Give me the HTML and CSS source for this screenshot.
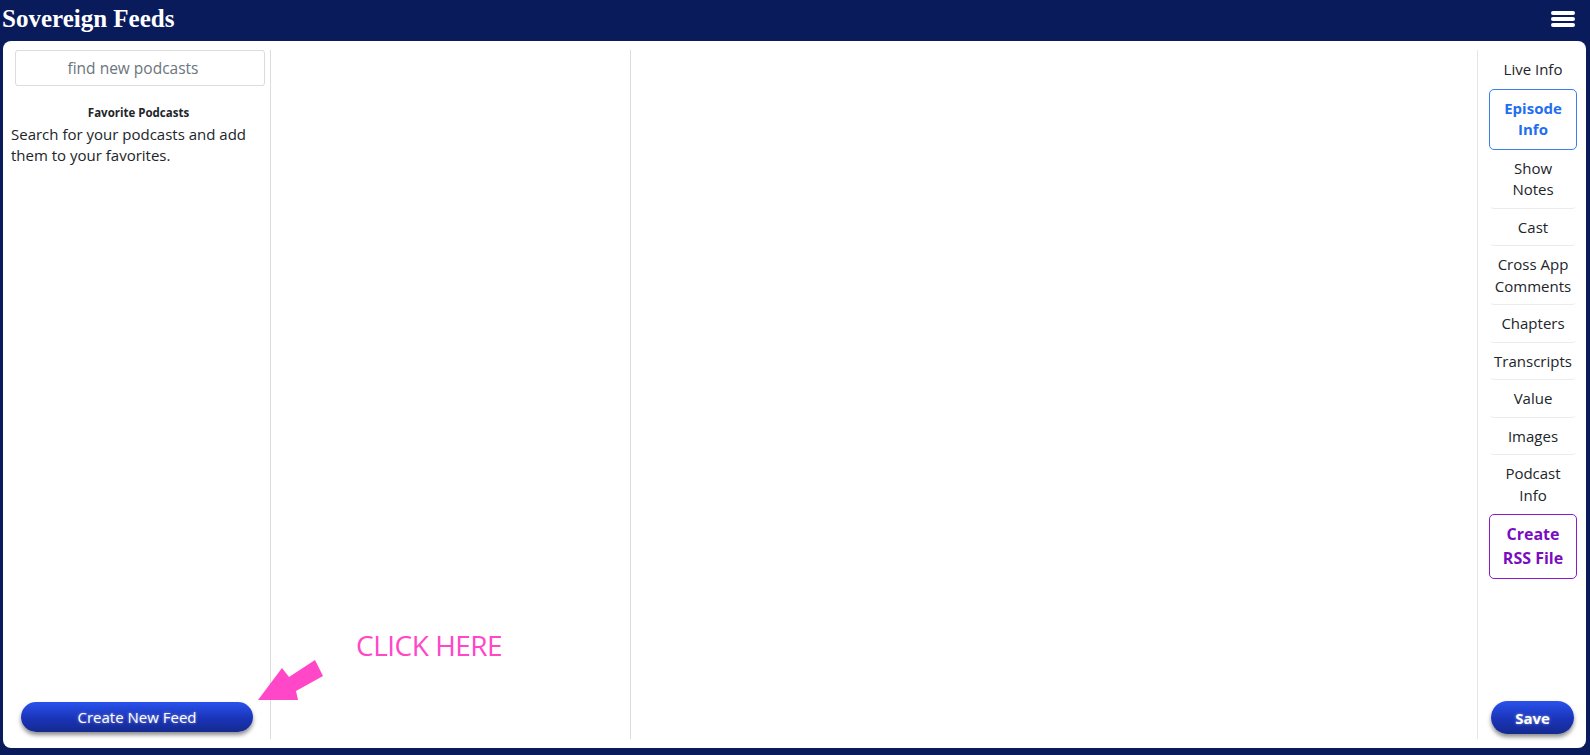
FILE: index.html
```html
<!DOCTYPE html>
<html lang="en">
<head>
<meta charset="utf-8">
<title>Sovereign Feeds</title>
<link rel="stylesheet" href="styles.css">
</head>
<body>
<header class="topbar">
  <div class="brand">Sovereign Feeds</div>
  <button class="burger" aria-label="menu">
    <span></span><span></span><span></span>
  </button>
</header>
<main class="panel">
  <section class="col col-podcasts">
    <input class="search" type="text" placeholder="find new podcasts">
    <h6 class="fav-title">Favorite Podcasts</h6>
    <p class="fav-empty">Search for your podcasts and add them to your favorites.</p>
    <button class="btn-pill btn-new">Create New Feed</button>
  </section>
  <section class="col col-episodes"></section>
  <section class="col col-main"></section>
  <nav class="col col-nav">
    <ul class="nav-list">
      <li class="nav-item">Live Info</li>
      <li class="nav-item active">Episode Info</li>
      <li class="nav-item sep">Show Notes</li>
      <li class="nav-item sep">Cast</li>
      <li class="nav-item sep">Cross App Comments</li>
      <li class="nav-item sep">Chapters</li>
      <li class="nav-item sep">Transcripts</li>
      <li class="nav-item sep">Value</li>
      <li class="nav-item sep">Images</li>
      <li class="nav-item">Podcast Info</li>
      <li class="nav-item rss">Create RSS File</li>
    </ul>
    <button class="btn-pill btn-save">Save</button>
  </nav>
  <div class="callout">CLICK HERE</div>
  <svg class="callout-arrow" width="70" height="45" viewBox="0 0 70 45">
    <polygon points="0,42 24,10 31,19 57,2 65,18 38,33 40,42" fill="#ff47c8"/>
  </svg>
</main>
</body>
</html>
```
FILE: styles.css
```css
* { box-sizing: border-box; }
html, body { margin: 0; padding: 0; }
body {
  background: #0a1b5c;
  font-family: "Open Sans", "Noto Sans", sans-serif;
  color: #212529;
  height: 755px;
  overflow: hidden;
}
.topbar {
  height: 41px;
  display: flex;
  align-items: center;
  justify-content: space-between;
  padding: 0 15px 0 2px;
}
.brand {
  font-family: "Liberation Serif", "DejaVu Serif", serif;
  font-weight: bold;
  font-size: 25px;
  color: #fff;
  margin-top: -4px;
}
.burger {
  background: none;
  border: 0;
  padding: 0;
  width: 24px;
  display: flex;
  flex-direction: column;
  gap: 2px;
  margin-top: -4px;
}
.burger span {
  display: block;
  height: 4px;
  border-radius: 2px;
  background: #fff;
}
.panel {
  position: relative;
  margin: 0 4px 0 3px;
  height: 707px;
  background: #fff;
  border-radius: 8px;
  display: flex;
  padding: 9px 0;
}
.col { height: 100%; }
.col-podcasts {
  width: 268px;
  border-right: 1px solid #dcdcdc;
  padding: 0 4px 0 8px;
  display: flex;
  flex-direction: column;
}
.search {
  margin-left: 4px;
  width: 250px;
  height: 36px;
  border: 1px solid #dcdcdc;
  border-radius: 3px;
  text-align: center;
  padding: 0 14px 0 0;
  font-family: inherit;
  font-size: 15.5px;
  color: #555;
}
.search::placeholder { color: #6c757d; }
.fav-title {
  margin: 19px 0 0;
  text-align: center;
  font-size: 11.5px;
  font-weight: bold;
  line-height: 16px;
}
.fav-empty {
  margin: 3px 0 0;
  font-size: 15px;
  line-height: 21px;
}
.btn-pill {
  border: 0;
  border-radius: 16px;
  color: #fff;
  font-family: inherit;
  background: linear-gradient(#2a52ec, #1a34b8 55%, #142a8f);
  box-shadow: 0 3px 4px rgba(0,0,0,0.45);
  text-shadow: 0 0 3px rgba(255,255,255,0.5);
  cursor: pointer;
}
.btn-new {
  margin-top: auto;
  margin-left: 10px;
  margin-bottom: 7px;
  width: 232px;
  height: 30px;
  font-size: 15px;
}
.col-episodes {
  width: 360px;
  border-right: 1px solid #dcdcdc;
}
.col-main { flex: 1; }
.col-nav {
  width: 109px;
  border-left: 1px solid #e6e6e6;
  padding: 1px 9px 0 11px;
  display: flex;
  flex-direction: column;
}
.nav-list {
  list-style: none;
  margin: 0;
  padding: 0;
}
.nav-item {
  text-align: center;
  font-size: 15px;
  line-height: 21.5px;
  padding: 7px 3px;
  border-radius: 5px;
  border: 1px solid transparent;
}
.nav-item.sep {
  border-bottom-color: #ececec;
}
.nav-item.active {
  border-color: #3a7ef0;
  color: #1f6ef0;
  font-weight: bold;
  padding: 8px 3px;
}
.nav-item.rss {
  border-color: #8a1bc6;
  color: #7a0cc0;
  font-weight: bold;
  font-size: 16px;
  line-height: 23.5px;
  padding: 8px 2px;
}
.btn-save {
  margin-top: auto;
  margin-bottom: 5px;
  margin-left: 2px;
  width: 83px;
  height: 33px;
  border-radius: 17px;
  font-weight: bold;
  font-size: 15px;
}
.callout {
  position: absolute;
  left: 353px;
  top: 585px;
  font-size: 28px;
  color: #ff47c8;
  font-family: "Open Sans", sans-serif;
  letter-spacing: -0.5px;
}
.callout-arrow {
  position: absolute;
  left: 255px;
  top: 617px;
}
```
